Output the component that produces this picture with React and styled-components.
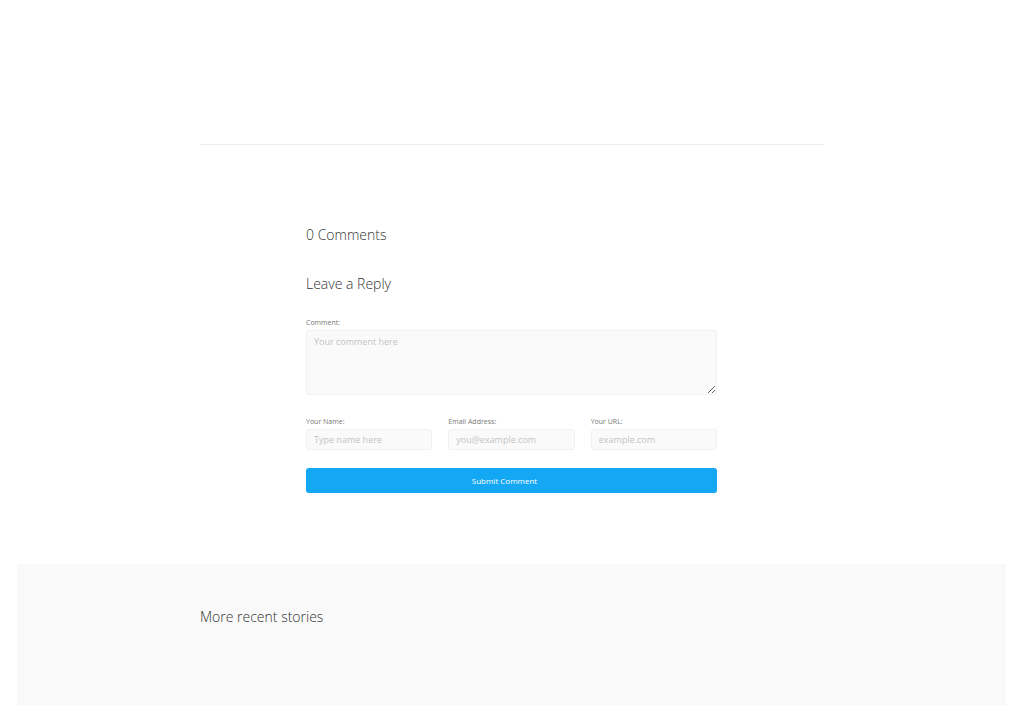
import React from "react";
import styled, { createGlobalStyle } from "styled-components";

const Global = createGlobalStyle`
  body {
    margin: 0;
    background: #fff;
    font-family: "Open Sans", "Liberation Sans", sans-serif;
    color: #444;
  }
`;

const Page = styled.div`
  width: 1024px;
  padding-top: 144px;
  display: flex;
  flex-direction: column;
  align-items: center;
`;

const Rule = styled.hr`
  width: 624px;
  height: 1px;
  border: 0;
  margin: 0;
  background: #eeeeee;
`;

const Comments = styled.section`
  width: 411px;
  margin-right: 1px;
  padding-top: 80px;
  display: flex;
  flex-direction: column;
`;

const Heading = styled.h3`
  margin: 0;
  font-size: 14px;
  font-weight: 300;
  line-height: 20px;
  color: #333;
  margin-bottom: ${(p) => p.$gap || 0}px;
`;

const Form = styled.form`
  display: flex;
  flex-direction: column;
  padding-top: 24px;
`;

const Field = styled.label`
  display: flex;
  flex-direction: column;
  gap: 2px;
  min-width: 0;
  font-size: 7px;
  line-height: 10px;
  color: #777;
`;

const TextArea = styled.textarea`
  height: 65px;
  box-sizing: border-box;
  padding: 4px 7px;
  border: 1px solid #f1f1f1;
  border-radius: 3px;
  background: #fafafa;
  font-family: inherit;
  font-size: 9px;
  line-height: 14px;
  color: #555;
  resize: vertical;
  outline: none;
  &::placeholder {
    color: #c4c4c4;
  }
`;

const Row = styled.div`
  display: grid;
  grid-template-columns: repeat(3, minmax(0, 1fr));
  column-gap: 16px;
  margin-top: 22px;
`;

const Input = styled.input`
  width: 100%;
  height: 21px;
  box-sizing: border-box;
  padding: 0 7px;
  border: 1px solid #f1f1f1;
  border-radius: 3px;
  background: #fafafa;
  font-family: inherit;
  font-size: 9px;
  color: #555;
  outline: none;
  &::placeholder {
    color: #c4c4c4;
  }
`;

const Submit = styled.button`
  margin-top: 18px;
  height: 25px;
  padding: 0 14px 1px 0;
  border: 0;
  border-radius: 3px;
  background: #13a7f4;
  color: #fff;
  font-family: inherit;
  font-size: 8px;
  font-weight: 400;
  cursor: pointer;
`;

const Stories = styled.section`
  margin-top: 71px;
  width: 989px;
  height: 141px;
  box-sizing: border-box;
  padding: 43px 0 0 183px;
  background: #f9f9f9;
  align-self: flex-start;
  margin-left: 17px;
`;

const StoriesTitle = styled.h2`
  margin: 0;
  font-size: 14px;
  font-weight: 300;
  line-height: 20px;
  color: #333;
`;

export default function App() {
  return (
    <>
      <Global />
      <Page>
        <Rule />
        <Comments>
          <Heading $gap={29}>0 Comments</Heading>
          <Heading>Leave a Reply</Heading>
          <Form onSubmit={(e) => e.preventDefault()}>
            <Field>
              Comment:
              <TextArea placeholder="Your comment here" />
            </Field>
            <Row>
              <Field>
                Your Name:
                <Input placeholder="Type name here" />
              </Field>
              <Field>
                Email Address:
                <Input placeholder="you@example.com" />
              </Field>
              <Field>
                Your URL:
                <Input placeholder="example.com" />
              </Field>
            </Row>
            <Submit type="submit">Submit Comment</Submit>
          </Form>
        </Comments>
        <Stories>
          <StoriesTitle>More recent stories</StoriesTitle>
        </Stories>
      </Page>
    </>
  );
}
